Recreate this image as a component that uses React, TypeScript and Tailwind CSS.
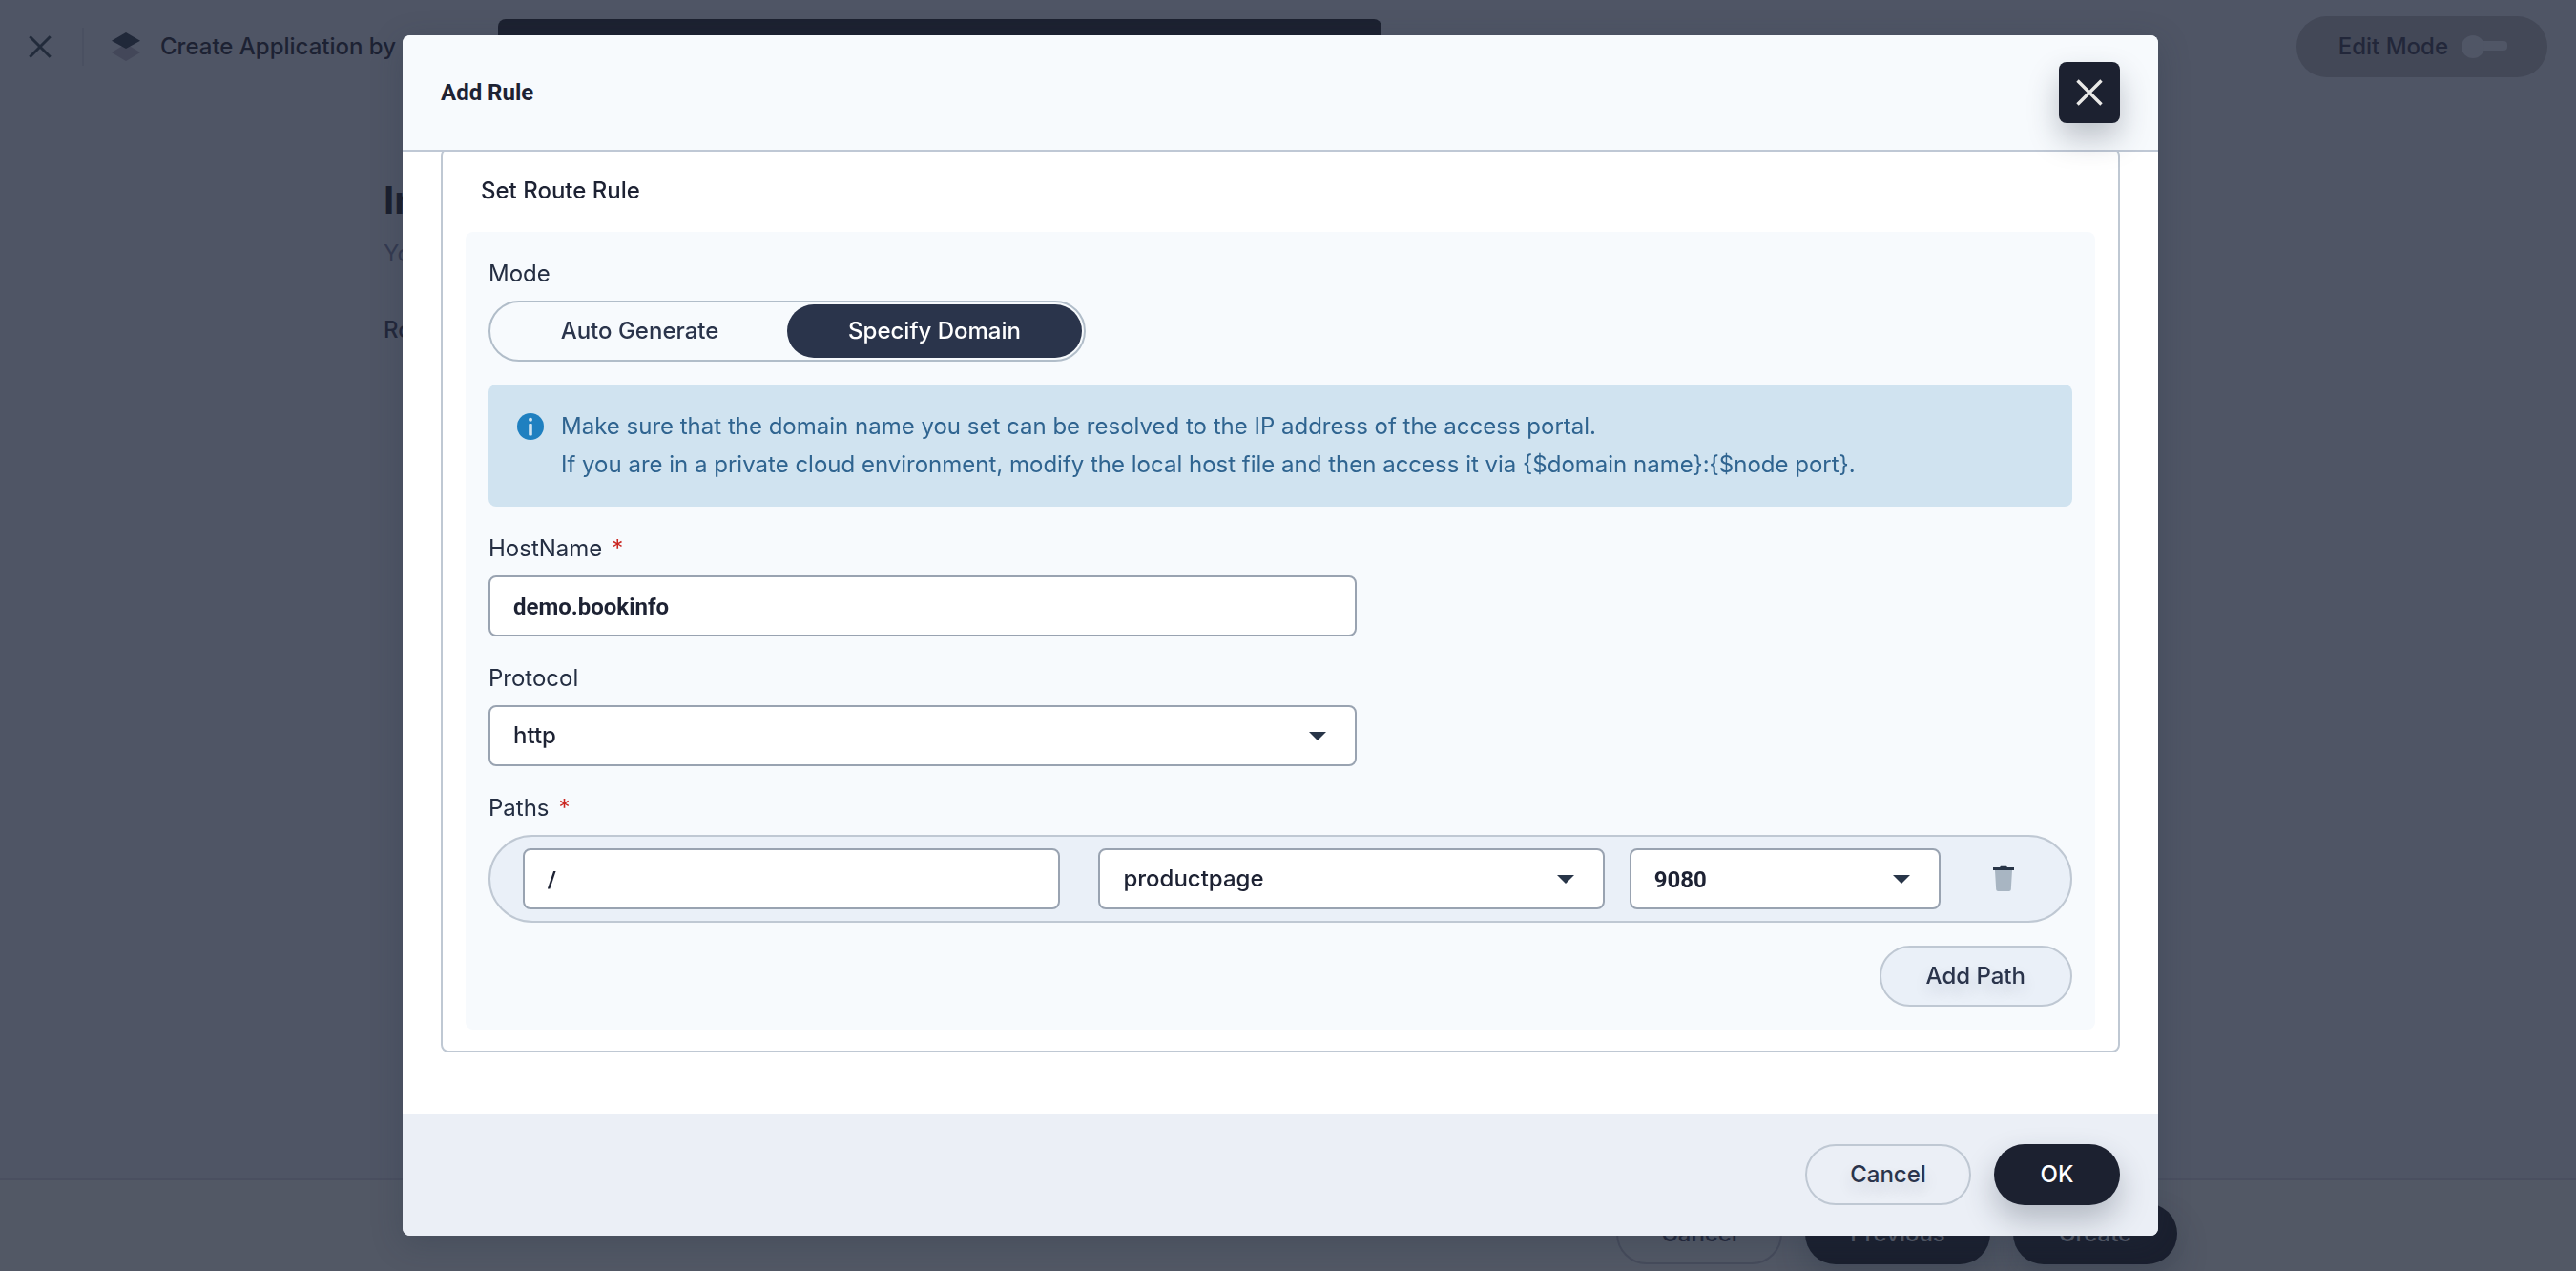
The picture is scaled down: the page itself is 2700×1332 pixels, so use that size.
import type { ReactNode } from "react";

const fieldClass =
  "h-16 w-full rounded-lg border-2 border-[#99a3b1] bg-white px-6 text-2xl text-[#1d2233] outline-none";

function CloseIcon({ className }: { className: string }) {
  return (
    <svg viewBox="0 0 28 28" className={className} fill="none" stroke="currentColor" strokeWidth="3.4" aria-hidden="true">
      <path d="M1.5 1.5 26.5 26.5M26.5 1.5 1.5 26.5" />
    </svg>
  );
}

function LayersIcon() {
  return (
    <svg viewBox="0 0 32 32" className="size-8" aria-hidden="true">
      <path d="M16 13 31 22 16 31 1 22Z" fill="#434759" />
      <path d="M16 1 31 9.8 16 18 1 9.8Z" fill="#202839" />
    </svg>
  );
}

function InfoIcon() {
  return (
    <svg viewBox="0 0 28 28" className="mt-1.5 size-7 shrink-0" aria-hidden="true">
      <circle cx="14" cy="14" r="14" fill="#1f80c0" />
      <circle cx="14" cy="6.8" r="2" fill="#d0e3f0" />
      <rect x="12.2" y="11" width="3.6" height="12.5" rx="1" fill="#d0e3f0" />
    </svg>
  );
}

function TrashIcon() {
  return (
    <svg viewBox="0 0 24 28" className="h-7 w-6" aria-hidden="true">
      <path d="M3 5h18l-1.2 20.2a2 2 0 0 1-2 1.8H6.2a2 2 0 0 1-2-1.8Z" fill="#a8b5c2" />
      <path d="M1 2h7l1-1.3h6L16 2h7v3H1Z" fill="#283547" />
    </svg>
  );
}

function Label({ htmlFor, required, children }: { htmlFor: string; required?: boolean; children: ReactNode }) {
  return (
    <label htmlFor={htmlFor} className="mb-2 flex gap-2.5 text-2xl leading-10 text-[#242e42]">
      {children}
      {required && <span className="text-[#ca2621]">*</span>}
    </label>
  );
}

function Select({ id, label, value, className }: { id: string; label?: string; value: string; className: string }) {
  return (
    <div className="relative">
      <select id={id} aria-label={label} defaultValue={value} className={`${fieldClass} appearance-none ${className}`}>
        <option>{value}</option>
      </select>
      <svg viewBox="0 0 18 9" className="pointer-events-none absolute top-7 right-8 h-[9px] w-[18px]" aria-hidden="true">
        <path d="M0 0h18L9 9Z" fill="#283548" />
      </svg>
    </div>
  );
}

function Page() {
  return (
    <div className="flex h-screen flex-col bg-[#4f5565]">
      <header className="flex h-[98px] shrink-0 items-center justify-between pr-[30px] pl-[30px]">
        <div className="flex items-center text-2xl font-medium text-[#1d2233]">
          <button type="button" aria-label="Exit" className="text-[#222b3b]">
            <CloseIcon className="size-6" />
          </button>
          <span className="ml-8 h-10 w-0.5 bg-[#4a5061]" />
          <span className="mr-5 ml-7">
            <LayersIcon />
          </span>
          Create Application by
        </div>
        <button
          type="button"
          className="flex h-16 items-center gap-3.5 rounded-full bg-[#434857] pr-[42px] pl-11 text-2xl font-medium text-[#22273a]"
        >
          Edit Mode
          <svg viewBox="0 0 48 24" className="h-6 w-12" fill="#505666" aria-hidden="true">
            <rect x="12" y="6" width="36" height="10" rx="4" />
            <circle cx="12" cy="12" r="12" />
          </svg>
        </button>
      </header>
      <main className="flex-1 pr-4">
        <div className="mx-auto max-w-[1880px] pt-20">
          <h1 className="text-[40px] leading-[64px] font-bold text-[#1a1f2e]">In</h1>
          <p className="mt-1 text-2xl leading-10 text-[#343a50]">You</p>
          <h2 className="mt-10 text-2xl leading-10 font-medium text-[#22273a]">Ro</h2>
        </div>
      </main>
      <footer className="h-[97px] shrink-0 border-t-2 border-[#4a4f60] bg-[#525865] pr-4">
        <div className="mx-auto flex max-w-[1880px] justify-end gap-6 pt-6 text-2xl font-medium">
          <button type="button" className="h-16 w-[174px] rounded-full border-2 border-[#464b5b] text-[#22273a]">
            Cancel
          </button>
          <button type="button" className="h-16 w-[194px] rounded-full bg-[#1a1f2e] text-[#565b68] shadow-[0_16px_32px_rgba(36,46,66,0.28)]">
            Previous
          </button>
          <button type="button" className="h-16 w-[172px] rounded-full bg-[#1a1f2e] text-[#565b68] shadow-[0_16px_32px_rgba(36,46,66,0.28)]">
            Create
          </button>
        </div>
      </footer>
      <div className="absolute top-5 right-0 left-0 flex justify-center pr-[730px]">
        <div className="h-14 w-[926px] rounded-lg bg-[#1c2130]" />
      </div>
    </div>
  );
}

function RouteRuleForm() {
  return (
    <div className="rounded-lg bg-[#f7fafd] p-6">
      <fieldset>
        <legend className="mb-2 text-2xl leading-10 text-[#242e42]">Mode</legend>
        <div className="grid h-16 w-[626px] max-w-full grid-cols-2 rounded-full border-2 border-[#b1bdc9] p-0.5 text-2xl font-medium">
          <label className="flex items-center justify-center rounded-full text-[#2a344b]">
            <input type="radio" name="mode" className="sr-only" />
            Auto Generate
          </label>
          <label className="flex items-center justify-center rounded-full bg-[#2a344b] text-white">
            <input type="radio" name="mode" className="sr-only" defaultChecked />
            Specify Domain
          </label>
        </div>
      </fieldset>

      <div className="mt-6 flex gap-[18px] rounded-lg bg-[#d0e3f0] px-[30px] py-6 text-2xl leading-10 text-[#2f6490]">
        <InfoIcon />
        <p>
          Make sure that the domain name you set can be resolved to the IP address of the access portal.
          <br />
          If you are in a private cloud environment, modify the local host file and then access it via {"{$domain name}:{$node port}."}
        </p>
      </div>

      <div className="mt-6 max-w-[910px]">
        <Label htmlFor="hostname" required>
          HostName
        </Label>
        <input id="hostname" defaultValue="demo.bookinfo" className={`${fieldClass} pt-0.5 font-['Roboto',sans-serif] font-bold`} />
      </div>

      <div className="mt-6 max-w-[910px]">
        <Label htmlFor="protocol">Protocol</Label>
        <Select id="protocol" value="http" className="font-medium" />
      </div>

      <div className="mt-6">
        <Label htmlFor="path" required>
          Paths
        </Label>
        <div className="flex items-center rounded-full border-2 border-[#bfc8d3] bg-[#eaf0f8] py-3 pl-[34px]">
          <div className="mr-10 flex-[563]">
            <input id="path" defaultValue="/" className={`${fieldClass} pt-0.5 font-['Roboto',sans-serif] font-bold`} />
          </div>
          <div className="mr-[26px] flex-[530]">
            <Select id="service" label="Service" value="productpage" className="font-medium" />
          </div>
          <div className="flex-[326]">
            <Select id="port" label="Port" value="9080" className="pt-0.5 font-['Roboto',sans-serif] font-bold" />
          </div>
          <button type="button" aria-label="Delete path" className="mr-1 flex w-[132px] justify-center">
            <TrashIcon />
          </button>
        </div>
      </div>

      <div className="mt-6 flex justify-end">
        <button
          type="button"
          className="h-16 rounded-full border-2 border-[#bfc8d3] bg-[#eaf0f8] px-[47px] text-2xl font-medium text-[#2a344b] [text-shadow:0_8px_16px_rgba(36,46,66,0.16)]"
        >
          Add Path
        </button>
      </div>
    </div>
  );
}

export default function App() {
  return (
    <div className="relative overflow-hidden font-['Inter',sans-serif]">
      <Page />
      <div className="fixed inset-0 flex items-center justify-center pr-4">
        <div
          role="dialog"
          aria-labelledby="dialog-title"
          className="flex w-full max-w-[1840px] flex-col overflow-hidden rounded-lg bg-white shadow-[0_8px_32px_rgba(36,46,66,0.25)]"
        >
          <header className="relative z-10 flex h-[122px] items-center justify-between border-b-2 border-[#bfc8d5] bg-[#f7fafd] px-10">
            <h2 id="dialog-title" className="font-['Roboto',sans-serif] text-2xl font-bold text-[#1d2233]">
              Add Rule
            </h2>
            <button
              type="button"
              aria-label="Close"
              className="flex size-16 items-center justify-center rounded-lg bg-[#1c2130] text-[#e9e9e7] shadow-[0_16px_32px_rgba(36,46,66,0.28)]"
            >
              <CloseIcon className="size-7" />
            </button>
          </header>

          <div className="overflow-hidden px-10 pb-16">
            <section className="-mt-1 rounded-lg border-2 border-[#bfc8d3] px-6 pb-[22px]">
              <h3 className="flex h-[86px] items-center px-4 text-2xl font-medium text-[#1d2233]">Set Route Rule</h3>
              <RouteRuleForm />
            </section>
          </div>

          <footer className="flex h-32 items-center justify-end gap-6 bg-[#ebeff6] px-10 text-2xl font-medium">
            <button
              type="button"
              className="h-16 w-[174px] rounded-full border-2 border-[#bfc8d3] text-[#2a344b] [text-shadow:0_8px_16px_rgba(36,46,66,0.16)]"
            >
              Cancel
            </button>
            <button type="button" className="h-16 w-[132px] rounded-full bg-[#1c2130] text-white shadow-[0_16px_32px_rgba(36,46,66,0.28)]">
              OK
            </button>
          </footer>
        </div>
      </div>
    </div>
  );
}
